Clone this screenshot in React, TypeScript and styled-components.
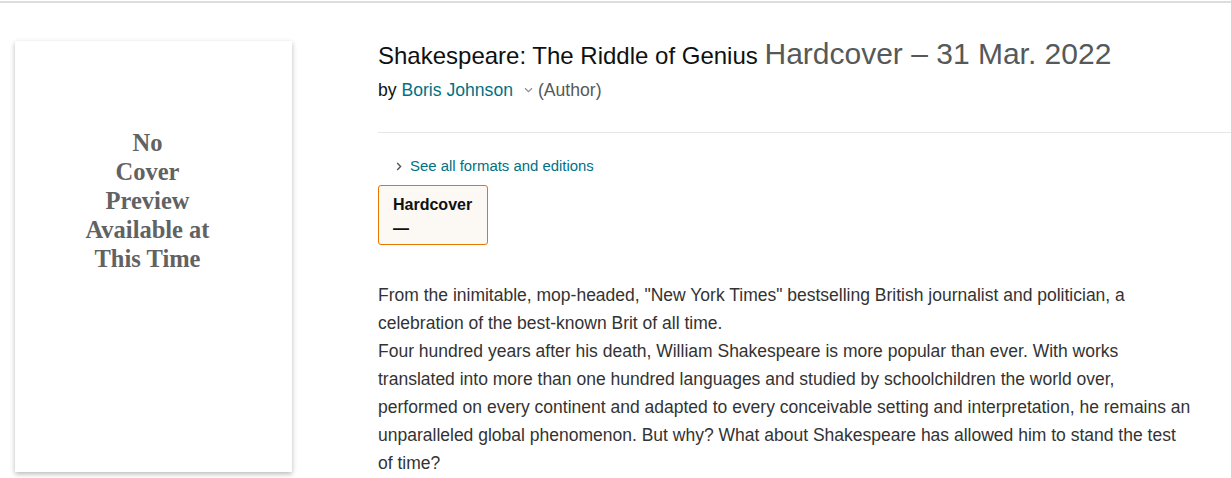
import React from 'react';
import styled, { createGlobalStyle } from 'styled-components';

const GlobalStyle = createGlobalStyle`
  body {
    margin: 0;
    background: #fff;
    font-family: Arial, "Liberation Sans", sans-serif;
    color: #0f1111;
  }
`;

const Page = styled.div`
  border-top: 2px solid #dddddd;
  margin-top: 1px;
  display: flex;
  align-items: flex-start;
  height: 475px;
  overflow: hidden;
`;

const CoverColumn = styled.div`
  width: 378px;
  flex-shrink: 0;
  padding: 38px 0 0 15px;
  box-sizing: border-box;
`;

const Cover = styled.div`
  width: 277px;
  height: 431px;
  background: #fff;
  box-shadow: 0 2px 5px rgba(0, 0, 0, 0.28);
  display: flex;
  flex-direction: column;
  align-items: center;
  padding: 87px 12px 0 0;
  box-sizing: border-box;
`;

const CoverText = styled.div`
  font-family: "Liberation Serif", "Times New Roman", serif;
  font-weight: bold;
  font-size: 24.5px;
  line-height: 29px;
  color: #626262;
  text-align: center;
`;

const Details = styled.div`
  flex: 1;
  padding-top: 32px;
`;

const Title = styled.h1`
  margin: 0;
  font-weight: normal;
  font-size: 24px;
  line-height: 38px;
  color: #0f1111;
`;

const Edition = styled.span`
  font-size: 30px;
  color: #565959;
`;

const Byline = styled.div`
  font-size: 17.6px;
  line-height: 24px;
  margin-top: 3px;
  display: flex;
  align-items: center;
`;

const Link = styled.span`
  color: #007185;
`;

const Muted = styled.span`
  color: #565959;
`;

const Chevron = styled.svg`
  margin: 0 5px 0 11px;
`;

const Divider = styled.hr`
  border: none;
  border-top: 1px solid #e7e7e7;
  margin: 30px 0 0;
`;

const Formats = styled.div`
  margin: 23px 0 0 18px;
  font-size: 14.9px;
  line-height: 20px;
  display: flex;
  align-items: center;
  gap: 8px;
  color: #007185;
`;

const Swatch = styled.div`
  margin-top: 9px;
  width: 110px;
  height: 60px;
  box-sizing: border-box;
  border: 1px solid #e77600;
  border-radius: 3px;
  background: #fcf8f4;
  padding: 7px 14px;
  font-size: 16px;
  font-weight: bold;
  line-height: 24px;
  color: #0f1111;
`;

const Description = styled.div`
  margin-top: 36px;
  width: 813px;
  font-size: 17.5px;
  line-height: 28px;
  color: #333333;
`;

const Paragraph = styled.p`
  margin: 0;
`;

export default function App() {
  return (
    <>
      <GlobalStyle />
      <Page>
        <CoverColumn>
          <Cover>
            <CoverText>
              No
              <br />
              Cover
              <br />
              Preview
              <br />
              Available at
              <br />
              This Time
            </CoverText>
          </Cover>
        </CoverColumn>
        <Details>
          <Title>
            Shakespeare: The Riddle of Genius <Edition>Hardcover – 31 Mar. 2022</Edition>
          </Title>
          <Byline>
            by&nbsp;<Link>Boris Johnson</Link>
            <Chevron width="9" height="6" viewBox="0 0 9 6">
              <path d="M1 1.2 L4.5 4.6 L8 1.2" fill="none" stroke="#8d9096" strokeWidth="1.3" />
            </Chevron>
            <Muted>(Author)</Muted>
          </Byline>
          <Divider />
          <Formats>
            <svg width="6" height="9" viewBox="0 0 6 9">
              <path d="M1.2 1 L4.6 4.5 L1.2 8" fill="none" stroke="#555" strokeWidth="1.4" />
            </svg>
            See all formats and editions
          </Formats>
          <Swatch>
            Hardcover
            <br />—
          </Swatch>
          <Description>
            <Paragraph>
              From the inimitable, mop-headed, "New York Times" bestselling British journalist and politician, a
              celebration of the best-known Brit of all time.
            </Paragraph>
            <Paragraph>
              Four hundred years after his death, William Shakespeare is more popular than ever. With works
              translated into more than one hundred languages and studied by schoolchildren the world over,
              performed on every continent and adapted to every conceivable setting and interpretation, he remains an
              unparalleled global phenomenon. But why? What about Shakespeare has allowed him to stand the test
              of time?
            </Paragraph>
          </Description>
        </Details>
      </Page>
    </>
  );
}
